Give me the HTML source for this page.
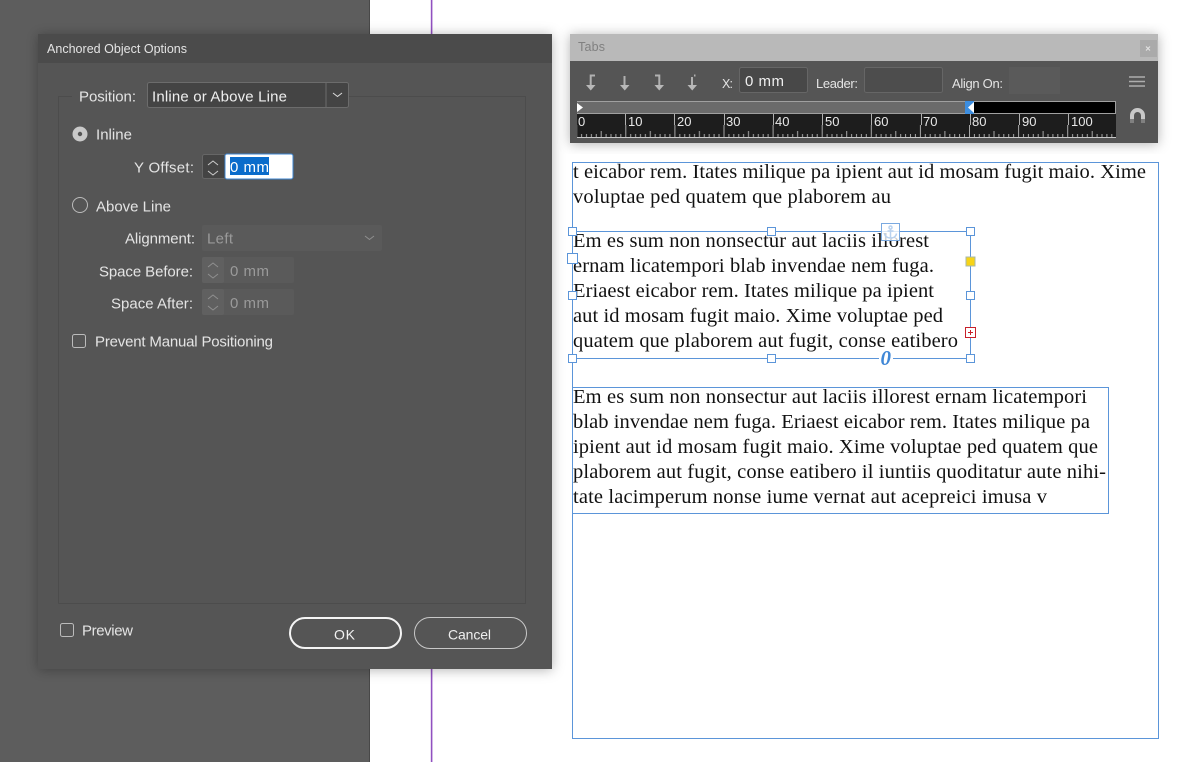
<!DOCTYPE html>
<html><head><meta charset="utf-8"><style>
html,body{margin:0;padding:0;width:1193px;height:762px;overflow:hidden;background:#fff}
svg{display:block}
.u{font-family:"Liberation Sans",sans-serif;font-size:15px;fill:#e4e4e4}
.d{fill:#9a9a9a}
.s{font-family:"Liberation Serif",serif;font-size:20.5px;fill:#111}
.h{fill:#fff;stroke:#5b95d9;stroke-width:1}
</style></head><body>
<svg width="1193" height="762" viewBox="0 0 1193 762" xmlns="http://www.w3.org/2000/svg">
<defs>
<filter id="sh" x="-10%" y="-10%" width="120%" height="120%"><feDropShadow dx="0" dy="1" stdDeviation="6" flood-color="#000" flood-opacity=".3"/></filter>
<pattern id="tk" x="576.2" y="125" width="49.1" height="13" patternUnits="userSpaceOnUse">
<path d="M.5 0V13M5.400 9V13M10.300 9V13M15.200 9V13M20.100 9V13M25 6V13M29.900 9V13M34.800 9V13M39.700 9V13M44.600 9V13" stroke="#a8a8a8" stroke-width="1" fill="none"/>
</pattern>
</defs>
<rect width="370" height="762" fill="#5d5d5d"/>
<rect x="369" width="1" height="762" fill="#484848"/>
<rect x="430.800" width="1.600" height="762" fill="#9150c0"/>

<!-- dialog -->
<g filter="url(#sh)"><rect x="38" y="34" width="514" height="635" fill="#545454"/></g>
<rect x="38" y="34" width="514" height="29" fill="#4b4b4b"/>
<text class="u" x="47" y="53" style="font-size:12.500px" textLength="140">Anchored Object Options</text>
<path d="M58.500 603.500V96.500H72M348 96.500H525.500V603.500H58.500" fill="none" stroke="#4c4c4c"/>

<text class="u" x="79" y="101.500" textLength="57">Position:</text>
<rect x="147.500" y="82.500" width="201" height="25" rx="2" fill="#444" stroke="#6c6c6c"/>
<path d="M326 83V107" stroke="#6c6c6c"/>
<text class="u" x="152" y="101.500" textLength="135" style="fill:#efefef">Inline or Above Line</text>
<path d="M333 93l4.500 3.500 4.500-3.500" fill="none" stroke="#ddd"/>

<circle cx="80" cy="134" r="7.500" fill="#c9c9c9"/><circle cx="80" cy="134" r="2.200" fill="#555"/>
<text class="u" x="96" y="139.500" textLength="36">Inline</text>
<text class="u" x="134" y="172.500" textLength="60">Y Offset:</text>
<rect x="202.500" y="154.500" width="23" height="24" rx="2" fill="#444" stroke="#666"/>
<path d="M208 165l5-4 5 4M208 171l5 4 5-4" fill="none" stroke="#ccc"/>
<rect x="225" y="154" width="68" height="25" rx="2" fill="#fff" stroke="#3d85d1"/>
<rect x="230" y="157" width="39" height="18" fill="#0a6ccb"/>
<text class="u" x="230" y="172" textLength="39" style="fill:#fff">0 mm</text>

<circle cx="80" cy="205" r="7.500" fill="none" stroke="#bbb"/>
<text class="u" x="96" y="211.500" textLength="75">Above Line</text>

<text class="u" x="125" y="243.500" textLength="70">Alignment:</text>
<rect x="202" y="225" width="180" height="26" rx="2" fill="#5a5a5a"/>
<text class="u d" x="207" y="243.500" textLength="26">Left</text>
<path d="M365 236l4.500 3.500 4.500-3.500" fill="none" stroke="#8f8f8f"/>

<text class="u" x="99" y="276.500" textLength="94">Space Before:</text>
<rect x="202" y="257" width="92" height="26" rx="2" fill="#5a5a5a"/>
<rect x="202" y="257" width="22" height="26" rx="2" fill="#606060"/>
<path d="M208 267l5-4 5 4M208 274l5 4 5-4" fill="none" stroke="#8f8f8f"/>
<text class="u d" x="230" y="276" textLength="39">0 mm</text>

<text class="u" x="111" y="308.500" textLength="82">Space After:</text>
<rect x="202" y="289" width="92" height="26" rx="2" fill="#5a5a5a"/>
<rect x="202" y="289" width="22" height="26" rx="2" fill="#606060"/>
<path d="M208 299l5-4 5 4M208 306l5 4 5-4" fill="none" stroke="#8f8f8f"/>
<text class="u d" x="230" y="308" textLength="39">0 mm</text>

<rect x="72.500" y="334.500" width="13" height="13" rx="2" fill="none" stroke="#bbb"/>
<text class="u" x="95" y="346.500" textLength="178">Prevent Manual Positioning</text>

<rect x="60.500" y="623.500" width="13" height="13" rx="2" fill="none" stroke="#bbb"/>
<text class="u" x="82" y="635.500" textLength="51">Preview</text>

<rect x="290" y="618" width="111" height="30" rx="15" fill="none" stroke="#f4f4f4" stroke-width="2"/>
<text class="u" x="334" y="639.500" textLength="21" style="fill:#f2f2f2;font-size:14px">OK</text>
<rect x="414.500" y="617.500" width="112" height="31" rx="15.500" fill="none" stroke="#c8c8c8"/>
<text class="u" x="448" y="639.500" textLength="43" style="fill:#eee;font-size:14px">Cancel</text>

<!-- tabs panel -->
<g filter="url(#sh)"><rect x="570" y="34" width="588" height="109" fill="#545454"/></g>
<rect x="570" y="34" width="588" height="27" fill="#b9b9b9"/>
<text class="u" x="578" y="51" style="font-size:12.500px;fill:#808080" textLength="27">Tabs</text>
<rect x="1140" y="40" width="17" height="17" fill="#aaa"/>
<path d="M1146 46.500l4 4M1150 46.500l-4 4" stroke="#e4e4e4"/>

<g fill="none" stroke="#b0b0b0" stroke-width="2">
<path d="M595 75.500H590.700V87"/><path d="M624.500 76V87"/><path d="M655 75.500H659.300V87"/><path d="M692 77V87M694 75.500h1.500"/>
</g>
<g fill="#b8b8b8"><path d="M586 85h9.500l-4.750 5.500zM620 85h9.500l-4.750 5.500zM654.500 85h9.500l-4.750 5.500zM687.500 85h9.500L692.250 90.500z"/></g>

<text class="u" x="722" y="88" textLength="11" style="font-size:12.500px">X:</text>
<rect x="739.500" y="67.500" width="68" height="25" rx="2" fill="#484848" stroke="#666"/>
<text class="u" x="745" y="86" textLength="39" style="fill:#efefef">0 mm</text>
<text class="u" x="816" y="88" textLength="42" style="font-size:13px">Leader:</text>
<rect x="864.500" y="67.500" width="78" height="25" rx="2" fill="#4d4d4d" stroke="#666"/>
<text class="u" x="952" y="88" textLength="51" style="font-size:13px">Align On:</text>
<rect x="1009" y="67" width="51" height="27" fill="#5a5a5a"/>
<path d="M1129 77H1145M1129 81.500H1145M1129 86H1145" stroke="#adadad" stroke-width="1.600"/>
<path d="M1132 123V115.500a5.500 5.500 0 0 1 11 0V123" fill="none" stroke="#c8c8c8" stroke-width="4"/>
<path d="M1132 119V123M1143 119V123" stroke="#808080" stroke-width="4"/>

<rect x="577" y="101" width="539" height="13" fill="#6b6b6b"/>
<rect x="974" y="102" width="141" height="11" fill="#000"/>
<path d="M577 101.500H1115.500V113.500H577" fill="none" stroke="#a0a0a0"/>
<path d="M577 103l6 4.500-6 4.500z" fill="#fff"/>
<rect x="965" y="101" width="9" height="13" fill="#3d8ee0"/>
<path d="M974 102v11l-6-5.500z" fill="#fff"/>
<rect x="577" y="114" width="539" height="24" fill="#1d1d1d"/>
<rect x="577" y="125" width="539" height="13" fill="url(#tk)"/>
<path d="M625.500 114V125M674.500 114V125M724.500 114V125M773.500 114V125M822.500 114V125M871.500 114V125M921.500 114V125M970.500 114V125M1019.500 114V125M1068.500 114V125" stroke="#b0b0b0"/>
<rect x="577" y="137" width="539" height="1" fill="#c8c8c8"/>
<g style="font-family:'Liberation Sans',sans-serif;font-size:13px" fill="#e8e8e8">
<text x="578" y="126">0</text><text x="628" y="126">10</text><text x="677" y="126">20</text><text x="726" y="126">30</text><text x="775" y="126">40</text><text x="825" y="126">50</text><text x="874" y="126">60</text><text x="923" y="126">70</text><text x="972" y="126">80</text><text x="1022" y="126">90</text><text x="1071" y="126">100</text>
</g>

<!-- page frames -->
<rect x="572.500" y="162.500" width="586" height="576" fill="none" stroke="#5b95d9"/>
<rect x="572.500" y="387.500" width="536" height="126" fill="none" stroke="#5b95d9"/>

<g class="s">
<text x="573" y="178" textLength="573">t eicabor rem. Itates milique pa ipient aut id mosam fugit maio. Xime</text>
<text x="573" y="203" textLength="318">voluptae ped quatem que plaborem au</text>
<text x="573" y="247" textLength="356">Em es sum non nonsectur aut laciis illorest</text>
<text x="573" y="272" textLength="361">ernam licatempori blab invendae nem fuga.</text>
<text x="573" y="297" textLength="361">Eriaest eicabor rem. Itates milique pa ipient</text>
<text x="573" y="322" textLength="370">aut id mosam fugit maio. Xime voluptae ped</text>
<text x="573" y="347" textLength="385">quatem que plaborem aut fugit, conse eatibero</text>
<text x="573" y="403" textLength="514">Em es sum non nonsectur aut laciis illorest ernam licatempori</text>
<text x="573" y="428" textLength="517">blab invendae nem fuga. Eriaest eicabor rem. Itates milique pa</text>
<text x="573" y="453" textLength="525">ipient aut id mosam fugit maio. Xime voluptae ped quatem que</text>
<text x="573" y="478" textLength="533">plaborem aut fugit, conse eatibero il iuntiis quoditatur aute nihi-</text>
<text x="573" y="503" textLength="474">tate lacimperum nonse iume vernat aut acepreici imusa v</text>
</g>

<!-- selected frame -->
<rect x="572.500" y="231.500" width="398" height="127" fill="none" stroke="#5b95d9"/>
<rect class="h" x="568.500" y="227.500" width="8" height="8"/>
<rect class="h" x="767.500" y="227.500" width="8" height="8"/>
<rect class="h" x="966.500" y="227.500" width="8" height="8"/>
<rect class="h" x="567.500" y="253.500" width="10" height="10"/>
<rect class="h" x="568.500" y="291.500" width="8" height="8"/>
<rect class="h" x="966.500" y="291.500" width="8" height="8"/>
<rect class="h" x="568.500" y="354.500" width="8" height="8"/>
<rect class="h" x="767.500" y="354.500" width="8" height="8"/>
<rect class="h" x="966.500" y="354.500" width="8" height="8"/>
<rect x="966" y="257" width="9" height="9" fill="#f7d417" stroke="#a9b8a8"/>
<rect x="965.500" y="327.500" width="10" height="10" fill="#fff" stroke="#c8202a"/>
<path d="M968 332.500h5M970.500 330v5" stroke="#c8202a"/>
<rect x="881.500" y="223.500" width="18" height="17" fill="#fff" fill-opacity=".8" stroke="#7aa9e0"/>
<g fill="none" stroke="#b9d2ef" stroke-width="1.500">
<circle cx="890.500" cy="227.500" r="1.500"/><path d="M890.500 229V238M887.500 231h6M884.500 233.500c.5 3 3 4.500 6 4.500s5.500-1.500 6-4.500"/>
</g>
<rect x="879" y="352" width="14" height="12" fill="#fff"/>
<text x="880.500" y="365" style="font-family:'Liberation Serif',serif;font-size:21px;font-style:italic;font-weight:bold" fill="#3f87d6">0</text>
</svg>
</body></html>
